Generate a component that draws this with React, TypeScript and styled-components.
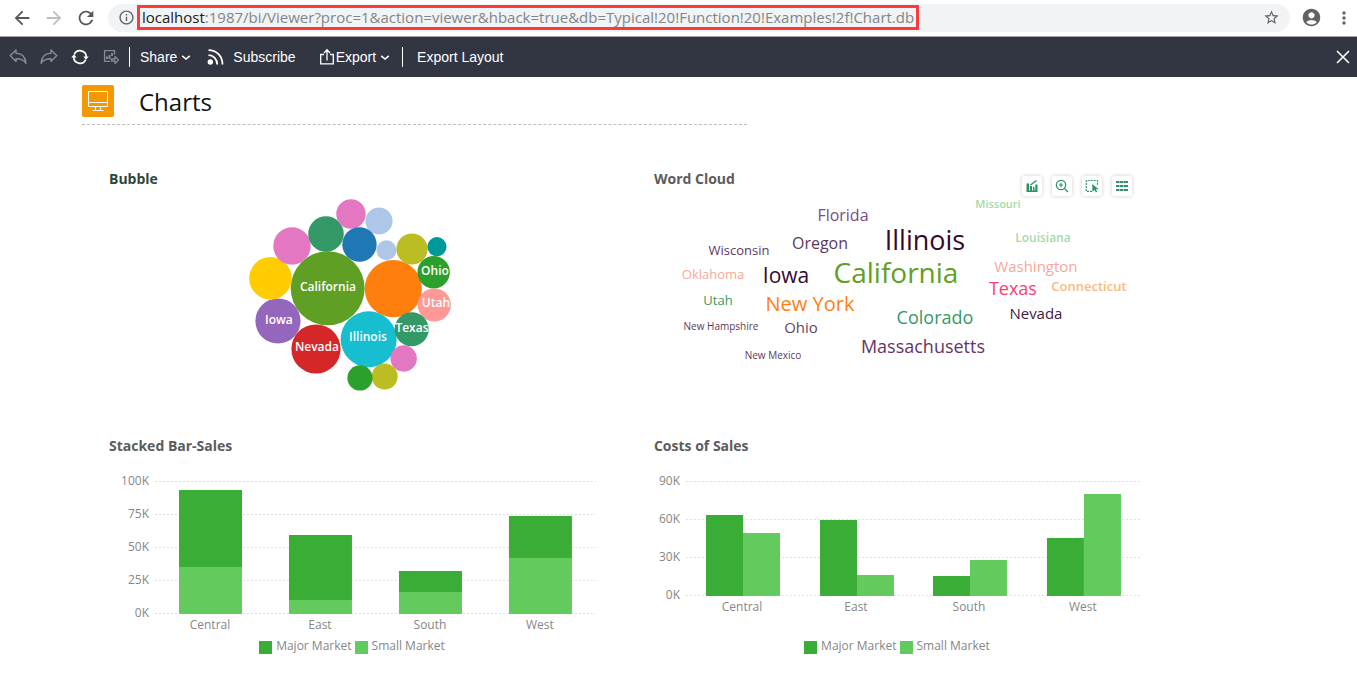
import React from "react";
import styled, { createGlobalStyle } from "styled-components";
import {
  MdAccountCircle,
  MdArrowBack,
  MdArrowForward,
  MdInfoOutline,
  MdMoreVert,
  MdRefresh,
  MdStarBorder,
} from "react-icons/md";

const uiFont = `"Open Sans", "Noto Sans", sans-serif`;
const MAJOR = "#3aad36";
const SMALL = "#63cb5d";

const GlobalStyle = createGlobalStyle`
  * { box-sizing: border-box; }
  body { margin: 0; background: #fff; font-family: ${uiFont}; }
  button { font: inherit; color: inherit; background: none; border: 0; padding: 0; cursor: pointer; }
  svg { display: block; flex: none; }
`;

/* ---------- browser bar ---------- */

const BrowserBar = styled.header`
  display: flex;
  align-items: center;
  height: 37px;
  padding: 0 3px 1px 11px;
  border-bottom: 1px solid #a6a6a6;
  color: #5f6368;
`;

const NavButton = styled.button<{ $dim?: boolean }>`
  display: flex;
  justify-content: center;
  width: 22px;
  margin-right: 10px;
  color: ${(p) => (p.$dim ? "#bcbec1" : "#55585d")};
`;

const AddressPill = styled.div`
  flex: 1;
  min-width: 0;
  display: flex;
  align-items: center;
  justify-content: space-between;
  height: 28px;
  padding: 0 10px;
  margin-left: 1px;
  border-radius: 14px;
  background: #f1f3f4;
`;

const AddressLeft = styled.div`
  display: flex;
  align-items: center;
  gap: 2px;
  min-width: 0;
`;

const Address = styled.div`
  height: 25px;
  padding: 0 2px;
  border: 3px solid #fb3a3a;
  font-size: 15px;
  line-height: 19px;
  white-space: nowrap;
  overflow: hidden;
  color: #80868b;
  outline: none;
`;

const Host = styled.span`
  color: #202124;
`;

const BrowserActions = styled.div`
  display: flex;
  align-items: center;
  gap: 12px;
  margin-left: 11px;
`;

/* ---------- viewer toolbar ---------- */

const Toolbar = styled.nav`
  display: flex;
  align-items: center;
  height: 40px;
  padding: 0 7px 0 9px;
  background: #323542;
  color: #fff;
  font-family: "Liberation Sans", Arial, sans-serif;
  font-size: 14px;
  line-height: 20px;
  text-shadow: 0 0 1px rgba(255, 255, 255, 0.6);
`;

const IconGroup = styled.div`
  display: flex;
  gap: 13px;
`;

const IconButton = styled.button<{ $off?: boolean }>`
  color: ${(p) => (p.$off ? "#858791" : "#fff")};
`;

const Separator = styled.span<{ $before: number; $after: number }>`
  width: 1px;
  height: 20px;
  margin: 0 ${(p) => p.$after}px 0 ${(p) => p.$before}px;
  background: #fff;
`;

const ToolButton = styled.button<{ $gap?: number; $before?: number }>`
  display: flex;
  align-items: center;
  gap: ${(p) => p.$gap ?? 0}px;
  margin-left: ${(p) => p.$before ?? 0}px;
`;

const CloseButton = styled.button`
  margin-left: auto;
`;

/* ---------- dashboard ---------- */

const PageHeader = styled.div`
  display: flex;
  align-items: center;
  gap: 25px;
  width: 49%;
  height: 48px;
  margin-left: 82px;
  border-bottom: 1px dashed #bdbdbd;
`;

const PageTitle = styled.h1`
  margin: 0;
  padding-top: 2px;
  font-size: 24px;
  line-height: 32px;
  font-weight: 400;
  color: #111;
`;

const Dashboard = styled.main`
  display: grid;
  grid-template-columns: 1fr 1fr;
  gap: 44px 59px;
  padding: 44px 16% 28px 109px;
`;

const Panel = styled.section`
  min-width: 0;
`;

const PanelHeader = styled.div`
  display: flex;
  justify-content: space-between;
  height: 20px;
`;

const PanelTitle = styled.h2<{ $tone?: string }>`
  margin: 0;
  font-size: 14px;
  line-height: 20px;
  font-weight: 700;
  color: ${(p) => p.$tone ?? "#5c5c5c"};
`;

const ChartTools = styled.div`
  display: flex;
  gap: 10px;
  padding: 7px 8px 0 0;
`;

const ChartTool = styled.button`
  display: flex;
  align-items: center;
  justify-content: center;
  width: 20px;
  height: 20px;
  border-radius: 3px;
  background: #fff;
  box-shadow: 0 0 4px rgba(0, 0, 0, 0.2);
  color: #2e9467;
`;

const Chart = styled.svg`
  width: 100%;
  height: auto;
  overflow: visible;
  font-family: ${uiFont};
`;

const AxisText = styled.text`
  font-size: 12px;
  fill: #868686;
`;

const BubbleText = styled.text`
  font-size: 12px;
  font-weight: 600;
  fill: #fff;
  text-anchor: middle;
`;

const Legend = styled.ul`
  display: flex;
  justify-content: center;
  gap: 3px;
  margin: 0;
  padding: 0;
  list-style: none;
  font-size: 12px;
  line-height: 20px;
  color: #868686;
`;

const LegendItem = styled.li`
  display: flex;
  align-items: center;
  gap: 4px;
`;

const Swatch = styled.span<{ $color: string }>`
  width: 13px;
  height: 13px;
  margin-top: 3px;
  background: ${(p) => p.$color};
`;

/* ---------- icons ---------- */

const Undo = ({ flip = false }: { flip?: boolean }) => (
  <svg width="18" height="18" viewBox="0 0 18 18" fill="none" stroke="currentColor" strokeWidth="1.5" strokeLinejoin="round">
    <path
      transform={flip ? "translate(18 0) scale(-1 1)" : undefined}
      d="M1.2 7.6 7 2v3.3c5.4 0 9.3 3.4 9.9 10-1.9-3.3-4.9-4.5-9.9-4.5v2.8Z"
    />
  </svg>
);

const Reload = () => (
  <svg width="18" height="18" viewBox="0 0 18 18" fill="none" stroke="currentColor" strokeWidth="1.7">
    <path d="M3.3 6.4A6.3 6.3 0 0 1 15.3 9" />
    <path d="M14.7 11.6A6.3 6.3 0 0 1 2.7 9" />
    <path d="M12.3 8.6h5.4l-2.7 3.2ZM.3 9.4h5.4L3 6.2Z" fill="currentColor" stroke="none" />
  </svg>
);

const ChartExport = () => (
  <svg width="18" height="18" viewBox="0 0 18 18" fill="none" stroke="currentColor" strokeWidth="1.4">
    <path d="M12.5 6.5V2.6H2.6v10.8H8" />
    <path d="M5 11V8.5M7.5 11V7M10 8V5" strokeWidth="2" />
    <path d="M13 8.5 16.5 12 13 15.5V13H9.5v-2H13Z" strokeLinejoin="round" />
  </svg>
);

const Chevron = () => (
  <svg width="10" height="10" viewBox="0 0 10 10" fill="none" stroke="currentColor" strokeWidth="1.6">
    <path d="M1.2 3.8 5 7l3.8-3.2" />
  </svg>
);

const Feed = () => (
  <svg width="18" height="18" viewBox="0 0 18 18" fill="none" stroke="currentColor" strokeWidth="1.8">
    <circle cx="3.3" cy="14" r="2.7" fill="currentColor" stroke="none" />
    <path d="M1.5 7.2c5 0 8.7 3.9 8.7 9.3M1.5 2.2c8 0 14 6 14 14.3" />
  </svg>
);

const ShareUp = () => (
  <svg width="16" height="18" viewBox="0 0 16 18" fill="none" stroke="currentColor" strokeWidth="1.3">
    <path d="M5 6.5H1.7v9.3h12.6V6.5H11M8 12.5V2.5M5 5l3-3.2L11 5" />
  </svg>
);

const Monitor = () => (
  <svg width="32" height="32" viewBox="0 0 32 32" fill="none" stroke="#fff">
    <rect width="32" height="32" rx="2" fill="#f39800" stroke="none" />
    <path d="M6.5 6.5h19v15h-19ZM6.5 17.5h19M13.5 21.5v4M18.5 21.5v4M10.5 25.5h11" />
  </svg>
);

const BarTool = () => (
  <svg width="14" height="14" viewBox="0 0 14 14" fill="currentColor">
    <path d="M1.5 4.5h2.5v8H1.5ZM5 7h2v5.5H5ZM8 8h1.5v4.5H8ZM10.3 5.5h2.2v7h-2.2ZM1.5 11.5h11v1.5h-11Z" />
    <path d="M5.5 6 11.5 1.5" stroke="currentColor" strokeWidth="1.5" />
  </svg>
);

const ZoomTool = () => (
  <svg width="14" height="14" viewBox="0 0 14 14" fill="none" stroke="currentColor" strokeWidth="1.2">
    <circle cx="6" cy="6" r="4.7" />
    <path d="M9.5 9.5 13 13M6 3.8v4.4M3.8 6h4.4" />
  </svg>
);

const SelectTool = () => (
  <svg width="14" height="14" viewBox="0 0 14 14" fill="none" stroke="currentColor" strokeWidth="1.2">
    <path d="M7 12.4H1.3V1.5h11.2V6" strokeDasharray="2 1" />
    <path d="M7.2 5 13.5 10l-2.5.3 1.2 2.5-1.4.7-1.2-2.5-2.2 1.5Z" fill="currentColor" stroke="none" />
  </svg>
);

const ListTool = () => (
  <svg width="14" height="14" viewBox="0 0 14 14" fill="none" stroke="currentColor" strokeWidth="2">
    <path d="M1 3h3M4.5 3h4M9 3h4M1 7h3M4.5 7h4M9 7h4M1 11h3M4.5 11h4M9 11h4" />
  </svg>
);

const Cross = () => (
  <svg width="14" height="14" viewBox="0 0 14 14" fill="none" stroke="currentColor" strokeWidth="1.6">
    <path d="m1 1 12 12M13 1 1 13" />
  </svg>
);

/* ---------- data ---------- */

type Bubble = { x: number; y: number; r: number; fill: string; label?: string; tx?: number; ty?: number };

const bubbles: Bubble[] = [
  { x: 218.7, y: 99.3, r: 37, fill: "#5fa024", label: "California", tx: 219, ty: 102 },
  { x: 284.3, y: 99.7, r: 28.6, fill: "#ff7f0e" },
  { x: 259.7, y: 150.3, r: 28, fill: "#17becf", label: "Illinois", tx: 259, ty: 152 },
  { x: 207, y: 160, r: 24.6, fill: "#d62728", label: "Nevada", tx: 208, ty: 162 },
  { x: 169, y: 132, r: 22.6, fill: "#9467bd", label: "Iowa", tx: 170, ty: 135 },
  { x: 161.5, y: 89.3, r: 21.3, fill: "#ffcc00" },
  { x: 183, y: 57, r: 18.7, fill: "#e377c2" },
  { x: 217, y: 45, r: 17.8, fill: "#339966" },
  { x: 242, y: 25, r: 14.7, fill: "#e377c2" },
  { x: 270, y: 32, r: 13.6, fill: "#aec7e8" },
  { x: 250.5, y: 55.5, r: 17.2, fill: "#1f77b4" },
  { x: 277.5, y: 61.3, r: 10, fill: "#aec7e8" },
  { x: 303, y: 60, r: 15.6, fill: "#bcbd22" },
  { x: 328, y: 57.7, r: 9.6, fill: "#009999" },
  { x: 324.7, y: 83.3, r: 16.2, fill: "#2ca02c", label: "Ohio", tx: 326, ty: 86 },
  { x: 325.3, y: 116, r: 16.6, fill: "#ff9896", label: "Utah", tx: 327, ty: 118 },
  { x: 302.7, y: 140.3, r: 17, fill: "#339966", label: "Texas", tx: 303, ty: 143 },
  { x: 294.7, y: 169.5, r: 13.2, fill: "#e377c2" },
  { x: 275.7, y: 187.5, r: 13, fill: "#bcbd22" },
  { x: 251, y: 189, r: 12.6, fill: "#2ca02c" },
];

type Word = { text: string; x: number; y: number; size: number; fill: string; weight?: number };

const words: Word[] = [
  { text: "Missouri", x: 344, y: 19, size: 11, fill: "#a3d9ab", weight: 600 },
  { text: "Florida", x: 189, y: 32, size: 16, fill: "#7b4c84" },
  { text: "Illinois", x: 271, y: 61, size: 27, fill: "#330a2b" },
  { text: "Louisiana", x: 389, y: 53, size: 12, fill: "#a3d9ab", weight: 600 },
  { text: "Wisconsin", x: 85, y: 66, size: 13, fill: "#5a3a5c" },
  { text: "Oregon", x: 166, y: 60, size: 16, fill: "#5a3a5c" },
  { text: "Washington", x: 382, y: 83, size: 15, fill: "#f6a998", weight: 500 },
  { text: "Oklahoma", x: 59, y: 90, size: 13, fill: "#f9a896", weight: 500 },
  { text: "Iowa", x: 132, y: 94, size: 21, fill: "#330a2b" },
  { text: "California", x: 242, y: 94, size: 28, fill: "#5fa024" },
  { text: "Texas", x: 359, y: 106, size: 18, fill: "#ff3d71" },
  { text: "Connecticut", x: 435, y: 102, size: 13, fill: "#fdb97b", weight: 600 },
  { text: "New York", x: 156, y: 122, size: 20, fill: "#ff7f0e" },
  { text: "Utah", x: 64, y: 116, size: 13, fill: "#339966" },
  { text: "Nevada", x: 382, y: 130, size: 15, fill: "#43203f" },
  { text: "New Hampshire", x: 67, y: 141, size: 10, fill: "#5a3a5c" },
  { text: "Ohio", x: 147, y: 144, size: 15, fill: "#5f4760" },
  { text: "Colorado", x: 281, y: 135, size: 18, fill: "#339966" },
  { text: "Massachusetts", x: 269, y: 164, size: 18, fill: "#663366" },
  { text: "New Mexico", x: 119, y: 170, size: 10, fill: "#5a3a5c" },
];

type BarChartProps = {
  stacked?: boolean;
  left: number;
  first: number;
  pitch: number;
  barWidth: number;
  base: number;
  max: number;
  step: number;
  rows: { name: string; major: number; small: number }[];
};

const stackedRows = [
  { name: "Central", major: 58.3, small: 35.6 },
  { name: "East", major: 49.2, small: 10.6 },
  { name: "South", major: 15.9, small: 16.7 },
  { name: "West", major: 31.8, small: 42.4 },
];

const costRows = [
  { name: "Central", major: 64, small: 49.7 },
  { name: "East", major: 60, small: 16.6 },
  { name: "South", major: 15.8, small: 28.4 },
  { name: "West", major: 45.8, small: 80.5 },
];

function BarChart({ stacked, left, first, pitch, barWidth, base, max, step, rows }: BarChartProps) {
  const top = 25;
  const scale = (base - 1 - top) / max;
  const px = (v: number) => Math.round(v * scale);
  const ticks = Array.from({ length: max / step + 1 }, (_, i) => i * step);
  const labelShift = stacked ? Math.floor(barWidth / 2) : barWidth - 1;
  return (
    <Chart viewBox="0 0 486 180" role="img">
      {ticks.map((t) => {
        const y = base - 1 - px(t);
        return (
          <g key={t}>
            <line x1={left} x2="487" y1={y + 0.5} y2={y + 0.5} stroke="#dedede" strokeDasharray="2 2" />
            <AxisText x={left - 6} y={y + 4} textAnchor="end">{t}K</AxisText>
          </g>
        );
      })}
      {rows.map((r, i) => {
        const x = Math.round(first + i * pitch);
        const major = px(r.major);
        const small = px(r.small);
        return (
          <g key={r.name}>
            <rect x={x} y={base - major - (stacked ? small : 0)} width={barWidth} height={major} fill={MAJOR} />
            <rect x={stacked ? x : x + barWidth} y={base - small} width={barWidth} height={small} fill={SMALL} />
            <AxisText x={x + labelShift} y={base + 15} textAnchor="middle">
              {r.name}
            </AxisText>
          </g>
        );
      })}
    </Chart>
  );
}

const MarketLegend = () => (
  <Legend>
    <LegendItem><Swatch $color={MAJOR} />Major Market</LegendItem>
    <LegendItem><Swatch $color={SMALL} />Small Market</LegendItem>
  </Legend>
);

export default function App() {
  return (
    <>
      <GlobalStyle />
      <BrowserBar>
        <NavButton aria-label="Back"><MdArrowBack size={22} /></NavButton>
        <NavButton $dim aria-label="Forward"><MdArrowForward size={22} /></NavButton>
        <NavButton aria-label="Reload page"><MdRefresh size={22} /></NavButton>
        <AddressPill>
          <AddressLeft>
            <MdInfoOutline size={17} />
            <Address role="textbox" aria-label="Address" contentEditable suppressContentEditableWarning spellCheck={false}>
              <Host>localhost</Host>
              :1987/bi/Viewer?proc=1&amp;action=viewer&amp;hback=true&amp;db=Typical!20!Function!20!Examples!2f!Chart.db
            </Address>
          </AddressLeft>
          <button aria-label="Bookmark"><MdStarBorder size={17} /></button>
        </AddressPill>
        <BrowserActions>
          <button aria-label="Profile"><MdAccountCircle size={21} /></button>
          <button aria-label="Menu"><MdMoreVert size={20} /></button>
        </BrowserActions>
      </BrowserBar>

      <Toolbar>
        <IconGroup>
          <IconButton $off aria-label="Undo"><Undo /></IconButton>
          <IconButton $off aria-label="Redo"><Undo flip /></IconButton>
          <IconButton aria-label="Refresh"><Reload /></IconButton>
          <IconButton $off aria-label="Chart export"><ChartExport /></IconButton>
        </IconGroup>
        <Separator $before={9} $after={10} />
        <ToolButton $gap={4}>Share<Chevron /></ToolButton>
        <ToolButton $gap={8} $before={16}><Feed />Subscribe</ToolButton>
        <ToolButton $gap={1} $before={23}><ShareUp />Export<ToolButton as="span" $before={3}><Chevron /></ToolButton></ToolButton>
        <Separator $before={12} $after={14} />
        <ToolButton>Export Layout</ToolButton>
        <CloseButton aria-label="Close"><Cross /></CloseButton>
      </Toolbar>

      <PageHeader>
        <Monitor />
        <PageTitle>Charts</PageTitle>
      </PageHeader>

      <Dashboard>
        <Panel>
          <PanelHeader><PanelTitle $tone="#2f4538">Bubble</PanelTitle></PanelHeader>
          <Chart viewBox="0 0 486 203" role="img">
            {bubbles.map((b, i) => (
              <circle key={i} cx={b.x} cy={b.y} r={b.r} fill={b.fill} />
            ))}
            {bubbles.filter((b) => b.label).map((b) => (
              <BubbleText key={b.label} x={b.tx} y={b.ty}>{b.label}</BubbleText>
            ))}
          </Chart>
        </Panel>

        <Panel>
          <PanelHeader>
            <PanelTitle>Word Cloud</PanelTitle>
            <ChartTools>
              <ChartTool aria-label="Chart type"><BarTool /></ChartTool>
              <ChartTool aria-label="Zoom"><ZoomTool /></ChartTool>
              <ChartTool aria-label="Select area"><SelectTool /></ChartTool>
              <ChartTool aria-label="Show data"><ListTool /></ChartTool>
            </ChartTools>
          </PanelHeader>
          <Chart viewBox="0 0 486 203" role="img">
            {words.map((w) => (
              <text key={w.text} x={w.x} y={w.y} fontSize={w.size} fontWeight={w.weight ?? 400} fill={w.fill} textAnchor="middle">
                {w.text}
              </text>
            ))}
          </Chart>
        </Panel>

        <Panel>
          <PanelHeader><PanelTitle>Stacked Bar-Sales</PanelTitle></PanelHeader>
          <BarChart stacked left={46} first={70} pitch={110} barWidth={63} base={158} max={100} step={25} rows={stackedRows} />
          <MarketLegend />
        </Panel>

        <Panel>
          <PanelHeader><PanelTitle>Costs of Sales</PanelTitle></PanelHeader>
          <BarChart left={32} first={52} pitch={113.7} barWidth={37} base={140} max={90} step={30} rows={costRows} />
          <MarketLegend />
        </Panel>
      </Dashboard>
    </>
  );
}
